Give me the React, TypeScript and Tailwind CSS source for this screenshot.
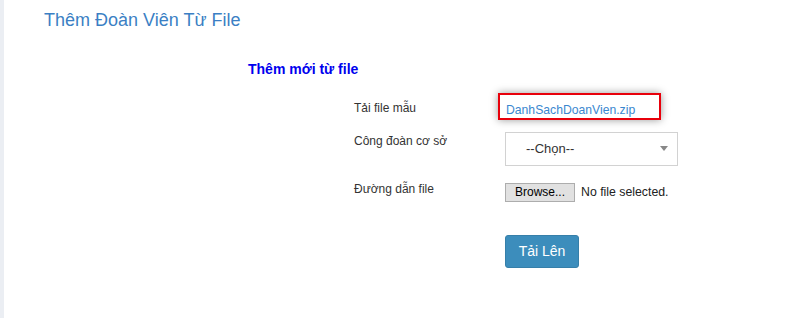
const labelCls = 'text-[12px] leading-[17px] text-[#333]'

const App = () => {
  return (
    <div className="flex w-[804px] h-[318px] bg-white font-['Liberation_Sans',Arial,sans-serif]">
      <div className="w-[4px] bg-[#ebeef3]" />
      <div className="flex-1 flex flex-col">
        <h1 className="mt-[10px] ml-[40px] text-[18px] leading-[20px] text-[#3b7fc4]">
          Thêm Đoàn Viên Từ File
        </h1>
        <h2 className="mt-[29px] ml-[244px] text-[14px] leading-[20px] font-bold text-[#0000ee]">
          Thêm mới từ file
        </h2>
        <div className="ml-[350px] flex flex-col">
          <div className="mt-[14px] flex items-start">
            <div className={`w-[144px] pt-[7px] ${labelCls}`}>Tải file mẫu</div>
            <div className="w-[163px] h-[27px] border-2 border-[#e8000b] pl-[6px] pt-[2px] shadow-[0_0_8px_rgba(0,0,0,0.4)]">
              <a className="text-[12.2px] leading-[17px] text-[#3a87cf]">DanhSachDoanVien.zip</a>
            </div>
          </div>
          <div className="mt-[12px] flex items-start">
            <div className={`w-[151px] pt-[1px] ${labelCls}`}>Công đoàn cơ sở</div>
            <div className="w-[173px] h-[34px] border border-[#d2d2d2] flex items-center justify-between pl-[20px] pr-[9px]">
              <span className="text-[13px] text-[#333]">--Chọn--</span>
              <span className="w-0 h-0 border-l-[4px] border-r-[4px] border-t-[5px] border-l-transparent border-r-transparent border-t-[#888] mb-[2px]" />
            </div>
          </div>
          <div className="mt-[15px] flex items-start">
            <div className={`w-[151px] ${labelCls}`}>Đường dẫn file</div>
            <div className="mt-[2px] flex items-center">
              <button className="w-[70px] h-[19px] border border-[#adadad] bg-[#e1e1e1] text-[12px] leading-[17px] text-black">
                Browse...
              </button>
              <span className="ml-[6px] text-[12.3px] text-[#222]">No file selected.</span>
            </div>
          </div>
          <div className="mt-[33px] ml-[151px]">
            <button className="w-[74px] h-[33px] rounded-[3px] bg-[#3c8dbc] border border-[#367fa9] text-white text-[14px]">
              Tải Lên
            </button>
          </div>
        </div>
      </div>
    </div>
  )
}

export default App
